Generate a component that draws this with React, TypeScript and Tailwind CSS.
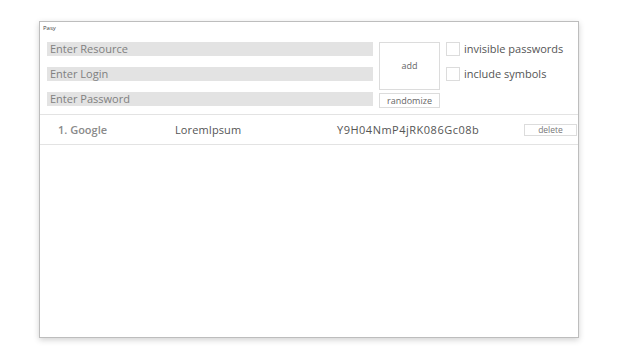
import React from "react";

const font = { fontFamily: '"Open Sans", "Noto Sans", sans-serif' };

export default function App() {
  return (
    <div className="w-[640px] h-[360px] bg-white overflow-hidden" style={font}>
      <div className="ml-[39px] mt-[21px] w-[540px] h-[317px] border border-[#bdbdbd] bg-white shadow-[0_2px_6px_rgba(0,0,0,0.18)] flex flex-col">
        {/* title */}
        <div className="h-[20px] pl-[3px] pt-[3px] text-[6px] leading-none text-[#444]">Pasy</div>

        {/* form */}
        <div className="flex pl-[7px] pr-[6px] h-[72px]">
          <div className="flex flex-col gap-[11px] w-[326px]">
            <div className="h-[14px] bg-[#e3e3e3] text-[11px] leading-[14px] pl-[3px] text-[#808080]">Enter Resource</div>
            <div className="h-[14px] bg-[#e3e3e3] text-[11px] leading-[14px] pl-[3px] text-[#808080]">Enter Login</div>
            <div className="h-[14px] bg-[#e3e3e3] text-[11px] leading-[14px] pl-[3px] text-[#808080]">Enter Password</div>
          </div>
          <div className="flex flex-col ml-[6px] w-[61px]">
            <button className="h-[48px] border border-[#dcdcdc] bg-white text-[9px] text-[#666]">add</button>
            <button className="mt-[3px] h-[15px] border border-[#dcdcdc] bg-white text-[9px] leading-none text-[#666]">randomize</button>
          </div>
          <div className="flex flex-col gap-[11px] ml-[6px]">
            <label className="flex items-center gap-[4px] h-[14px]">
              <span className="w-[14px] h-[14px] border border-[#dcdcdc] bg-white" />
              <span className="text-[11px] text-[#555]">invisible passwords</span>
            </label>
            <label className="flex items-center gap-[4px] h-[14px]">
              <span className="w-[14px] h-[14px] border border-[#dcdcdc] bg-white" />
              <span className="text-[11px] text-[#555]">include symbols</span>
            </label>
          </div>
        </div>

        {/* list */}
        <div className="border-t border-[#e3e3e3]" />
        <div className="h-[30px] flex items-center pt-[1px] border-b border-[#e3e3e3] text-[11px]">
          <span className="ml-[18px] w-[117px] text-[#8a8a8a] font-semibold">1. Google</span>
          <span className="w-[162px] text-[#555] tracking-[0.1px]">LoremIpsum</span>
          <span className="w-[187px] text-[#555] tracking-[0.5px]">Y9H04NmP4jRK086Gc08b</span>
          <button className="w-[53px] h-[12px] border border-[#dcdcdc] bg-white text-[8.5px] leading-none text-[#777]">delete</button>
        </div>
      </div>
    </div>
  );
}
